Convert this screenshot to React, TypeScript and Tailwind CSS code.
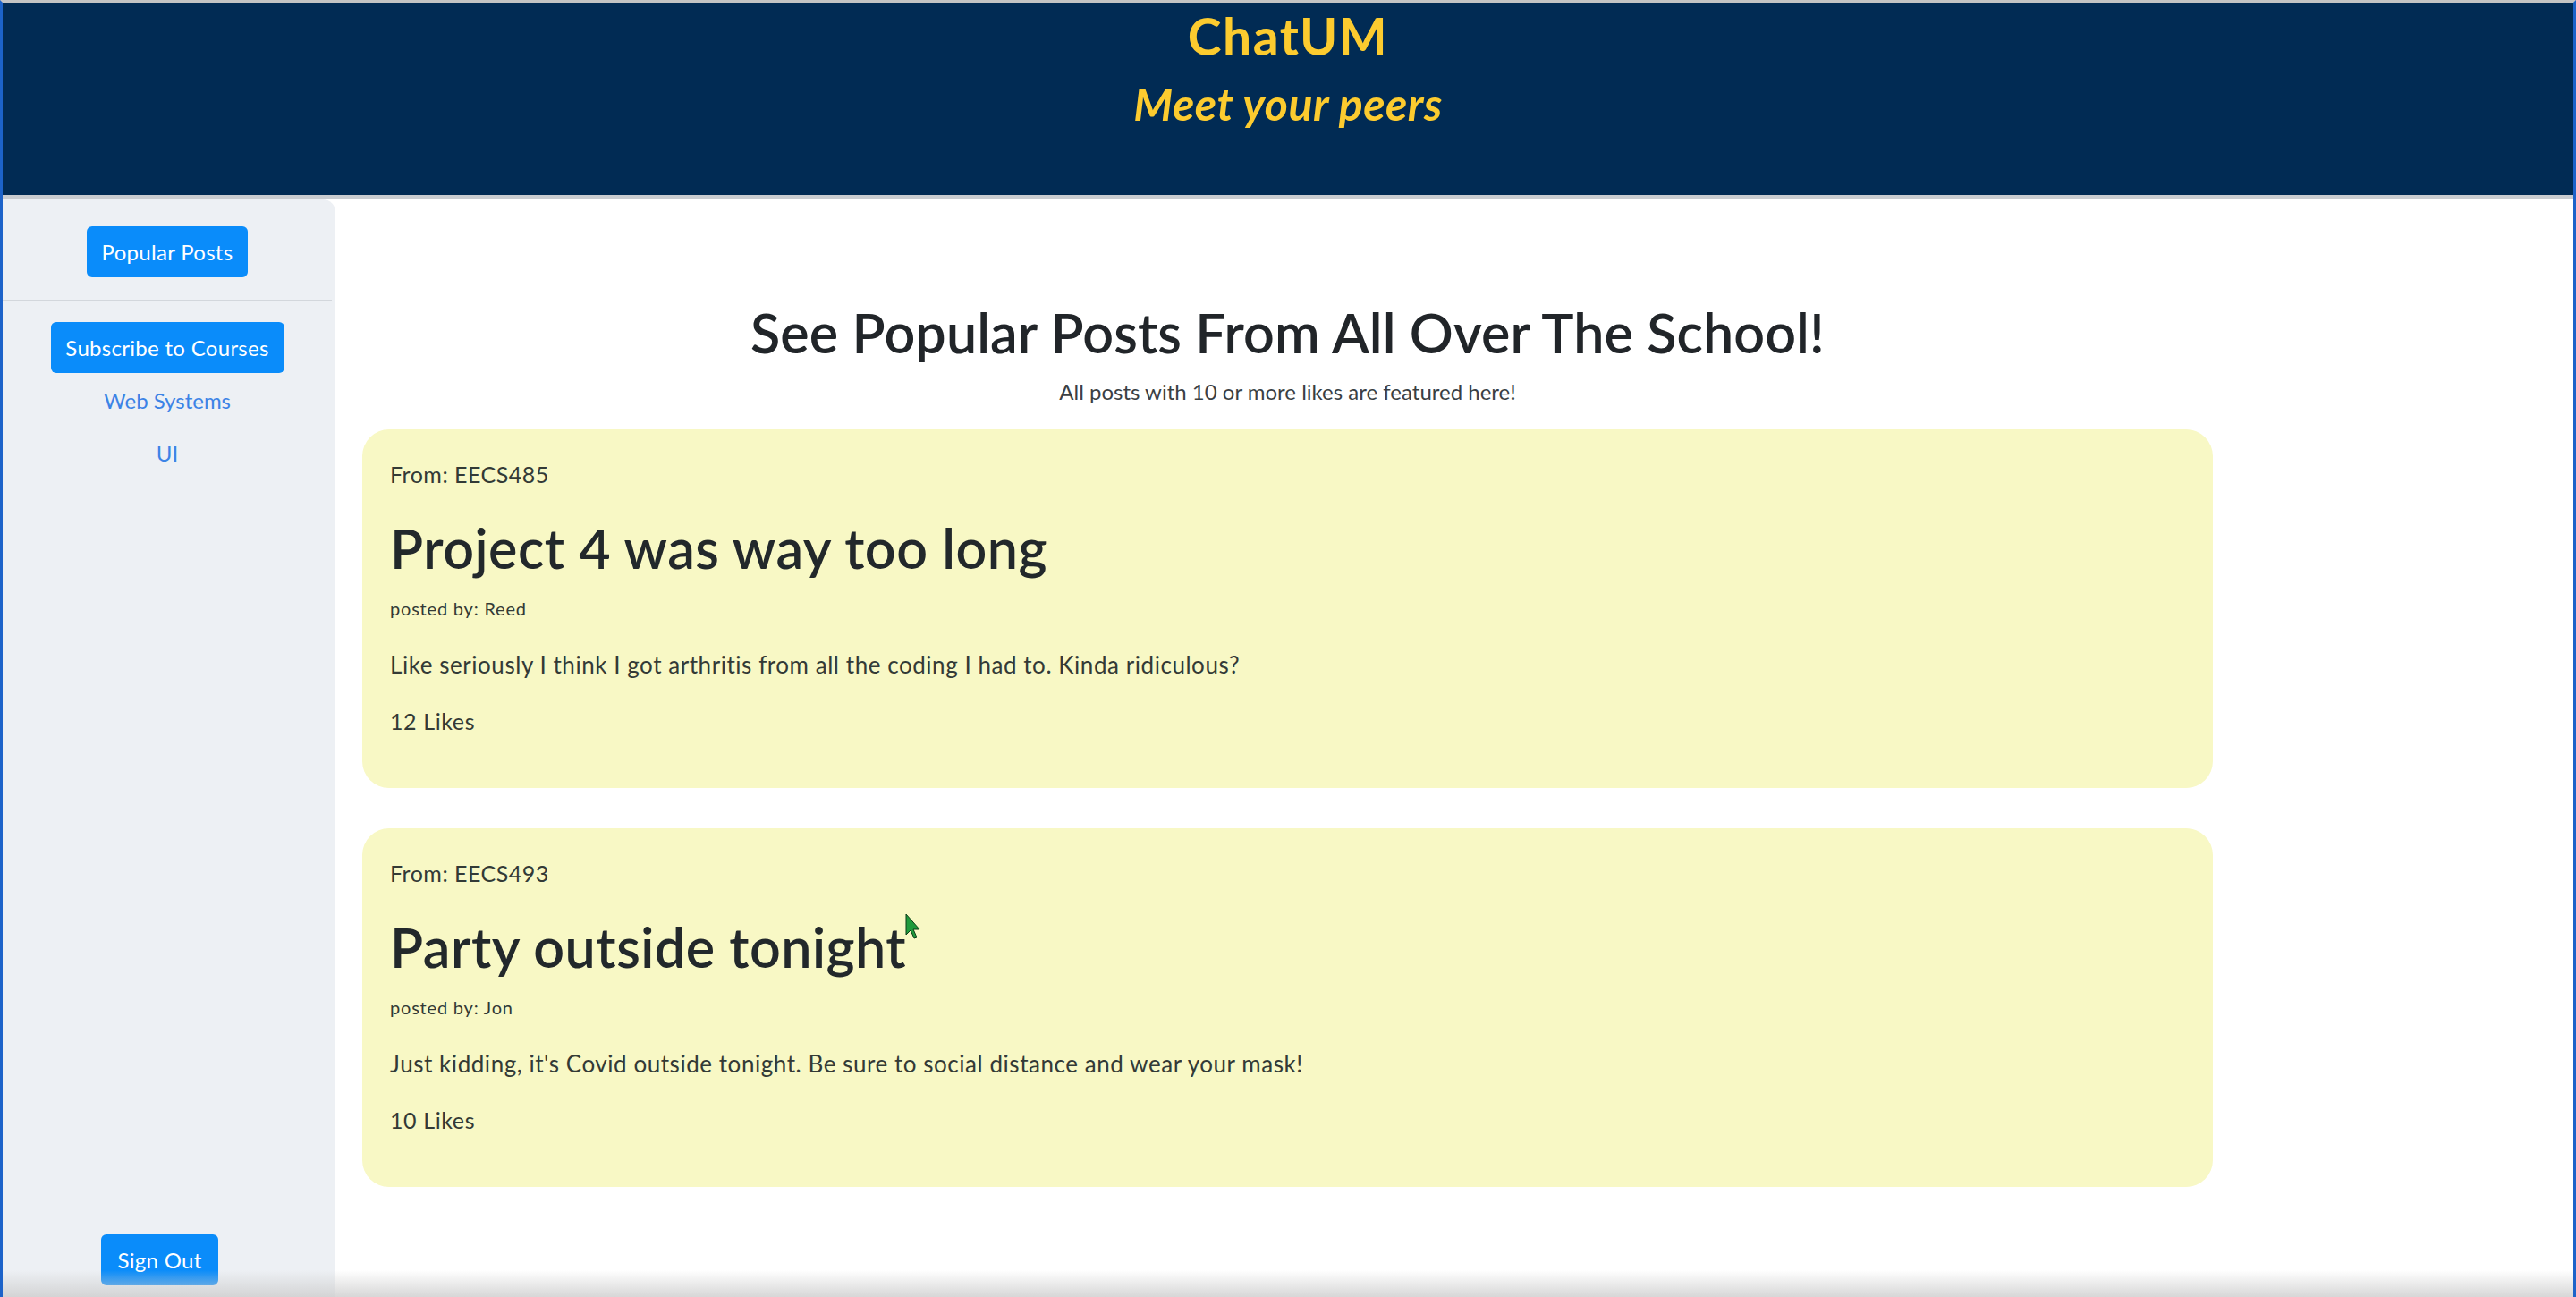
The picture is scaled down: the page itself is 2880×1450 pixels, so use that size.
import React from "react";

type Post = {
  course: string;
  title: string;
  author: string;
  body: string;
  likes: number;
};

const posts: Post[] = [
  {
    course: "EECS485",
    title: "Project 4 was way too long",
    author: "Reed",
    body: "Like seriously I think I got arthritis from all the coding I had to. Kinda ridiculous?",
    likes: 12,
  },
  {
    course: "EECS493",
    title: "Party outside tonight",
    author: "Jon",
    body: "Just kidding, it's Covid outside tonight. Be sure to social distance and wear your mask!",
    likes: 10,
  },
];

function Header() {
  return (
    <header className="h-[219px] shrink-0 bg-[#012b54] pt-[9px] text-center text-[#fccb2f] border-b-[4px] border-[#c9ccd0]">
      <h1 className="text-[57px] leading-[57px] font-bold tracking-[1.5px]">ChatUM</h1>
      <h2 className="mt-[22px] text-[50px] leading-[50px] font-bold italic tracking-[0.5px]">
        Meet your peers
      </h2>
    </header>
  );
}

function Sidebar() {
  return (
    <aside className="flex w-[372px] shrink-0 flex-col rounded-tr-[14px] bg-[#edf0f4] pt-[30px] pb-[13px] pr-[4px]">
      <div className="flex justify-center border-b border-[#d3d7dc] pb-[25px]">
        <button className="h-[57px] w-[180px] rounded-[6px] bg-[#0a8cfa] text-[24px] tracking-[0.3px] text-white">
          Popular Posts
        </button>
      </div>
      <div className="flex flex-col items-center pt-[24px]">
        <button className="h-[57px] w-[261px] rounded-[6px] bg-[#0a8cfa] text-[24px] tracking-[0.3px] text-white">
          Subscribe to Courses
        </button>
        <a className="mt-[19px] text-[24px] leading-[24px] text-[#3c83e6]">Web Systems</a>
        <a className="mt-[35px] text-[24px] leading-[24px] text-[#3c83e6]">UI</a>
      </div>
      <button className="mt-auto ml-[110px] h-[57px] w-[131px] rounded-[6px] bg-[#0a8cfa] text-[24px] tracking-[0.3px] text-white">
        Sign Out
      </button>
    </aside>
  );
}

function PostCard({ post }: { post: Post }) {
  return (
    <div className="rounded-[30px] bg-[#f8f8c5] px-[31px] pt-[38px] pb-[62px] text-[#333a36]">
      <p className="text-[25px] leading-[25px] tracking-[0.5px]">From: {post.course}</p>
      <h3 className="mt-[40px] text-[61px] leading-[60px] font-semibold tracking-[0.5px] text-[#22282b]">
        {post.title}
      </h3>
      <p className="mt-[27px] text-[20px] leading-[20px] tracking-[0.8px]">posted by: {post.author}</p>
      <p className="mt-[40px] text-[26px] leading-[26px] tracking-[0.55px]">{post.body}</p>
      <p className="mt-[38px] text-[25px] leading-[25px] tracking-[0.6px]">{post.likes} Likes</p>
    </div>
  );
}

export default function App() {
  return (
    <div className="relative flex h-[1450px] flex-col overflow-hidden border-t-[3px] border-x-[3px] border-t-[#c4c4c4] border-x-[#1d63c9] bg-white font-['Lato',sans-serif]">
      <Header />
      <div className="flex flex-1 pt-px">
        <Sidebar />
        <main className="flex-1 pl-[30px] pr-[403px] pt-[118px]">
          <h2 className="text-center text-[61px] leading-[62px] font-semibold tracking-[0.1px] text-[#212529]">
            See Popular Posts From All Over The School!
          </h2>
          <p className="mt-[23px] text-center text-[24px] leading-[24px] text-[#3a3f44]">
            All posts with 10 or more likes are featured here!
          </p>
          <div className="mt-[30px] flex flex-col gap-[45px]">
            {posts.map((p) => (
              <PostCard key={p.course} post={p} />
            ))}
          </div>
        </main>
      </div>
      {/* mouse cursor from the recording */}
      <svg
        className="pointer-events-none absolute left-[1009px] top-[1018px]"
        width="18"
        height="30"
        viewBox="0 0 18 30"
      >
        <path d="M1 1 L1 24 L6 19 L10 28 L13 27 L9 18 L16 18 Z" fill="#1f9a3c" stroke="#0b3d17" strokeWidth="1" />
      </svg>
      <div className="pointer-events-none absolute bottom-0 left-0 right-0 h-[30px] bg-linear-to-b from-white/0 to-[#cdcdcd]/80" />
    </div>
  );
}
